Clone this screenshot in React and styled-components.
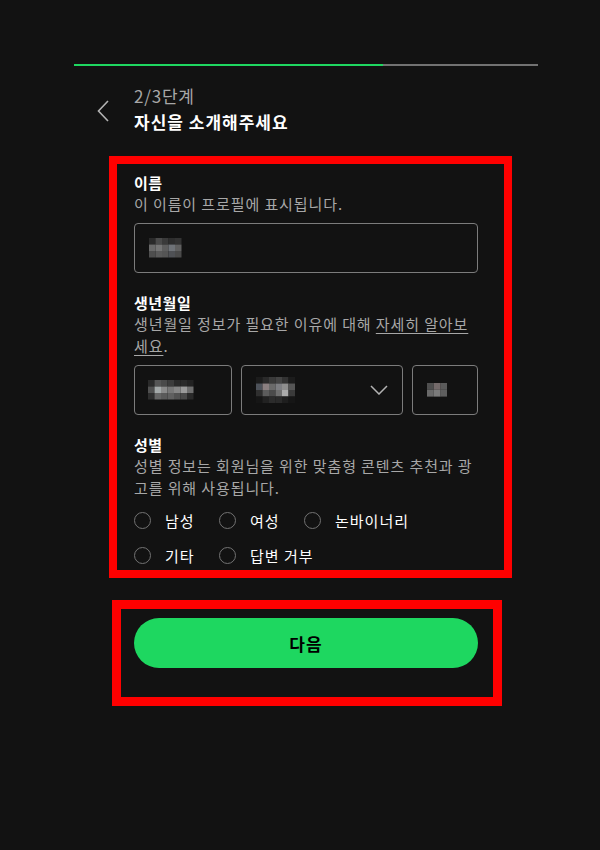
import styled, { createGlobalStyle } from "styled-components";

const GlobalStyle = createGlobalStyle`
  html, body {
    margin: 0;
    padding: 0;
    background: #121212;
  }
  body {
    font-family: "Noto Sans CJK KR", "Noto Sans", sans-serif;
    color: #ffffff;
  }
`;

const nameCells = [
  ["#2a2a2a", "#4a4a4a", "#3a3a3a", "#2e2e2e", "#333"],
  ["#6a6a6a", "#757575", "#5e5e5e", "#6f7378", "#606060"],
  ["#4e4e4e", "#5a5a5a", "#555", "#4f5155", "#4a4a4a"],
];
const yearCells = [
  ["#2a2a2a", "#555", "#4a4a4a", "#3c3c3c", "#2a2a2a", "#2a2a2a", "#222"],
  ["#505050", "#a4a9a9", "#8a8a8a", "#777", "#868686", "#9a9a9a", "#6e6e6e"],
  ["#2e2e2e", "#666", "#5a5a5a", "#606060", "#525252", "#4a4a4a", "#2a2a2a"],
];
const monthCells = [
  ["#1c1c1c", "#2a2a2a", "#3a3a3a", "#444", "#333", "#1c1c1c"],
  ["#4d525a", "#8a7f80", "#6a6a6a", "#7d7e82", "#8e8e8e", "#555"],
  ["#2f2f2f", "#5c5c5c", "#4b4b4b", "#6f6f6f", "#aaaaaa", "#3a3a3a"],
  ["#161616", "#222", "#2c2c2c", "#2a2a2a", "#1e1e1e", "#161616"],
];
const dayCells = [
  ["#4f4f4f", "#746a6a", "#5a5a5a"],
  ["#6a6a6a", "#7b7b7b", "#5e5e5e"],
];

const Mosaic = ({ cells, size = 7 }) => (
  <svg
    width={cells[0].length * size}
    height={cells.length * size}
    style={{ display: "block" }}
  >
    {cells.map((row, r) =>
      row.map((c, i) => (
        <rect key={`${r}-${i}`} x={i * size} y={r * size} width={size} height={size} fill={c} />
      ))
    )}
  </svg>
);

const genders = ["남성", "여성", "논바이너리", "기타", "답변 거부"];

const App = () => {
  return (
    <>
      <GlobalStyle />
      <Page>
        <Progress>
          <ProgressFill style={{ width: `${(2 / 3) * 100}%` }} />
        </Progress>
        <Header>
          <BackButton aria-label="뒤로">
            <svg width="24" height="24" viewBox="0 0 24 24" fill="none">
              <path d="M16 2 L6.5 12 L16 22" stroke="#b3b3b3" strokeWidth="1.6" />
            </svg>
          </BackButton>
          <HeaderText>
            <Step>2/3단계</Step>
            <Title>자신을 소개해주세요</Title>
          </HeaderText>
        </Header>

        <FormBox>
          <Field>
            <Label>이름</Label>
            <Hint>이 이름이 프로필에 표시됩니다.</Hint>
            <Input $width="344px">
              <Mosaic cells={nameCells} size={6.5} />
            </Input>
          </Field>

          <Field>
            <Label>생년월일</Label>
            <Hint>
              생년월일 정보가 필요한 이유에 대해 <Link>자세히 알아보세요</Link>.
            </Hint>
            <DateRow>
              <Input $width="98px" $pad="13px">
                <Mosaic cells={yearCells} size={6.5} />
              </Input>
              <Input $width="162px">
                <Mosaic cells={monthCells} size={6.5} />
                <Caret>
                  <svg width="18" height="10" viewBox="0 0 18 10" fill="none">
                    <path d="M1 1 L9 9 L17 1" stroke="#b3b3b3" strokeWidth="1.5" />
                  </svg>
                </Caret>
              </Input>
              <Input $width="66px">
                <Mosaic cells={dayCells} size={6.8} />
              </Input>
            </DateRow>
          </Field>

          <Field $last>
            <Label>성별</Label>
            <Hint>성별 정보는 회원님을 위한 맞춤형 콘텐츠 추천과 광고를 위해 사용됩니다.</Hint>
            <Radios>
              {genders.map((g) => (
                <RadioItem key={g}>
                  <RadioCircle />
                  <RadioLabel>{g}</RadioLabel>
                </RadioItem>
              ))}
            </Radios>
          </Field>
        </FormBox>

        <ButtonBox>
          <NextButton>다음</NextButton>
        </ButtonBox>
      </Page>
    </>
  );
};

export default App;

const Page = styled.div`
  width: 464px;
  margin-left: 74px;
  padding-top: 64px;
  min-height: 786px;
`;

const Progress = styled.div`
  height: 2px;
  background: #727272;
`;

const ProgressFill = styled.div`
  height: 100%;
  background: #1ed760;
`;

const Header = styled.div`
  display: flex;
  align-items: center;
  margin-top: 17px;
`;

const BackButton = styled.div`
  width: 60px;
  height: 48px;
  display: flex;
  align-items: center;
  justify-content: center;
  margin-top: 3px;
`;

const HeaderText = styled.div`
  display: flex;
  flex-direction: column;
`;

const Step = styled.div`
  font-size: 17px;
  line-height: 26px;
  letter-spacing: 0.8px;
  color: #a7a7a7;
`;

const Title = styled.div`
  font-size: 17px;
  line-height: 26px;
  letter-spacing: 1px;
  font-weight: 700;
  color: #ffffff;
`;

const FormBox = styled.div`
  box-sizing: border-box;
  width: 403px;
  margin-left: 35px;
  margin-top: 21px;
  border: 8px solid #ff0000;
  padding: 9px 0 0 17px;
  height: 422px;
`;

const Field = styled.div`
  display: flex;
  flex-direction: column;
  width: 344px;
  margin-bottom: ${(p) => (p.$last ? "0" : "20px")};
`;

const Label = styled.div`
  font-size: 15px;
  line-height: 20px;
  letter-spacing: 0.5px;
  font-weight: 700;
  color: #ffffff;
`;

const Hint = styled.div`
  font-size: 15px;
  line-height: 22px;
  letter-spacing: 0.9px;
  color: #a7a7a7;
`;

const Link = styled.span`
  text-decoration: underline;
  text-underline-offset: 3px;
`;

const Input = styled.div`
  box-sizing: border-box;
  width: ${(p) => p.$width};
  height: 50px;
  margin-top: 8px;
  border: 1px solid #7c7c7c;
  border-radius: 4px;
  display: flex;
  align-items: center;
  justify-content: space-between;
  padding: 0 14px 0 ${(p) => p.$pad || "14px"};
`;

const DateRow = styled.div`
  display: flex;
  gap: 9px;
`;

const Caret = styled.div`
  display: flex;
  align-items: center;
`;

const Radios = styled.div`
  display: grid;
  grid-template-columns: 85px 85px max-content;
  row-gap: 13px;
  margin-top: 10px;
`;

const RadioItem = styled.div`
  display: flex;
  align-items: center;
  gap: 14px;
  height: 22px;
  white-space: nowrap;
`;

const RadioCircle = styled.span`
  box-sizing: border-box;
  flex-shrink: 0;
  width: 17px;
  height: 17px;
  border: 1px solid #727272;
  border-radius: 50%;
`;

const RadioLabel = styled.span`
  font-size: 15px;
  letter-spacing: 1px;
  color: #ffffff;
`;

const ButtonBox = styled.div`
  box-sizing: border-box;
  width: 390px;
  height: 106px;
  margin-left: 38px;
  margin-top: 22px;
  border: 9px solid #ff0000;
  padding: 9px 0 0 13px;
`;

const NextButton = styled.div`
  width: 344px;
  height: 50px;
  border-radius: 25px;
  background: #1ed760;
  color: #000000;
  font-size: 17px;
  letter-spacing: 1px;
  font-weight: 700;
  display: flex;
  align-items: center;
  justify-content: center;
`;
